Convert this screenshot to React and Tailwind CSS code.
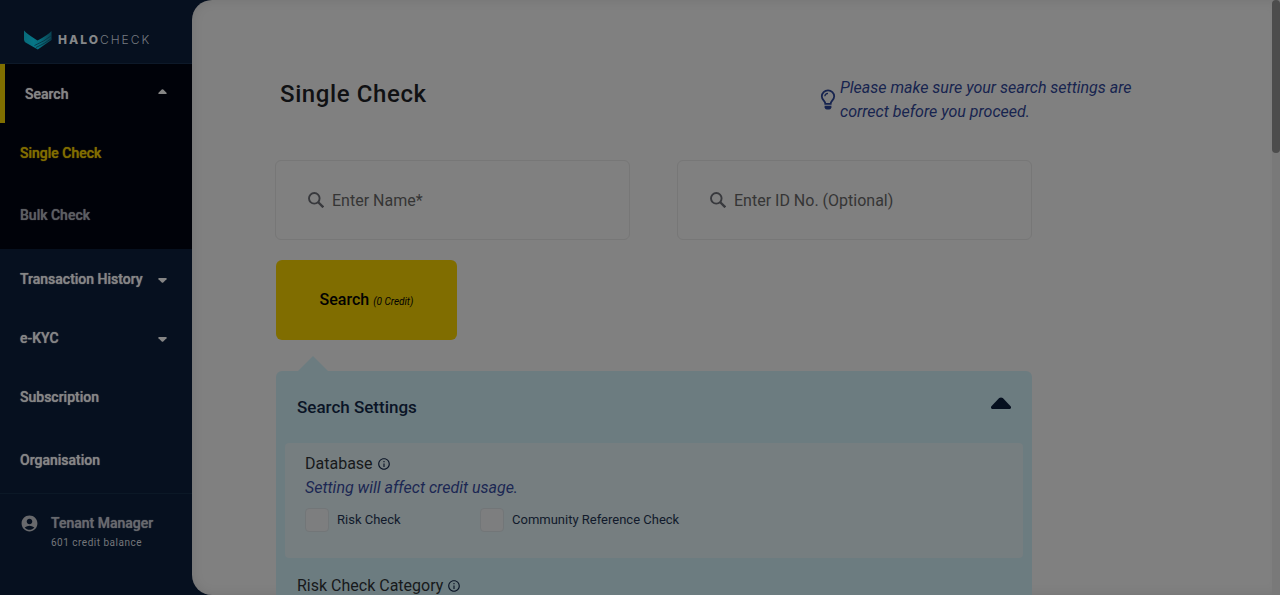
import { MdAccountCircle, MdInfoOutline } from 'react-icons/md';

function Caret({ up, className }) {
  return (
    <svg viewBox="0 0 10 6" className={className} fill="currentColor" aria-hidden="true">
      {up ? (
        <path d="M.6 6Q-.4 5.800.2 4.600L4.100.5Q5-.1 5.900.5L9.800 4.600Q10.400 5.800 9.400 6Z" />
      ) : (
        <path d="M.6 0Q-.4.2.2 1.400L4.100 5.500Q5 6.100 5.900 5.500L9.800 1.400Q10.400.2 9.400 0Z" />
      )}
    </svg>
  );
}

function Logo() {
  return (
    <a href="#home" className="flex h-16 items-center gap-[6px] border-b border-[#0d1929] pt-4 pl-6">
      <svg viewBox="0 0 28 20" className="h-5 w-7" aria-hidden="true">
        <defs>
          <linearGradient id="wing" x1="0" y1="0" x2="1" y2="0">
            <stop offset="0" stopColor="#086a79" />
            <stop offset="0.35" stopColor="#067687" />
            <stop offset="0.6" stopColor="#076a7a" />
            <stop offset="1" stopColor="#0a4352" />
          </linearGradient>
        </defs>
        <path fill="url(#wing)" d="M0 .5Q3 4 13.500 10.500Q24 5 27.500 1V10L13.800 19.500L1.500 12.500Q0 11.500 0 9.500Z" />
        <path fill="none" stroke="#07303f" strokeWidth=".8" d="M10.500 15.500Q21 11 27.500 5.500M12 17.500Q21 13.500 27.500 8.500" />
      </svg>
      <span className="font-['Inter',sans-serif] text-[12px] leading-4 tracking-[2px] text-[#777b81]">
        <b className="font-extrabold text-[#858789]">HALO</b>
        <span className="font-light">CHECK</span>
      </span>
    </a>
  );
}

function MenuButton({ label }) {
  return (
    <button type="button" aria-expanded="false" className="flex h-[59px] w-full items-center justify-between pr-[25px] pl-5 [text-shadow:0_0_1px_currentColor]">
      {label}
      <Caret className="mt-1 h-[5px] w-[9px]" />
    </button>
  );
}

function SearchField({ label }) {
  return (
    <label className="flex h-20 flex-1 items-center gap-2 rounded-md border border-[#777777] px-8">
      <svg viewBox="0 0 16 16" className="size-4 shrink-0 text-[#38393d]" fill="none" stroke="currentColor" aria-hidden="true">
        <circle cx="6.300" cy="6.300" r="5.300" strokeWidth="1.900" />
        <path strokeWidth="2.400" d="M10 10L15.300 15.300" />
      </svg>
      <input
        type="text"
        aria-label={label}
        placeholder={label}
        className="h-8 w-full min-w-0 bg-transparent pt-px text-base text-[#222222] outline-none placeholder:text-[#353535]"
      />
    </label>
  );
}

function Option({ label }) {
  return (
    <label className="flex items-center gap-2 text-[13px] leading-5 text-[#111a2b]">
      <input type="checkbox" className="size-6 shrink-0 appearance-none rounded border border-[#727678] bg-[#7d7e7f]" />
      {label}
    </label>
  );
}

function Bulb() {
  return (
    <svg viewBox="0 0 16 22" className="h-[22px] w-4 shrink-0 text-[#17244f]" fill="none" stroke="currentColor" aria-hidden="true">
      <path strokeWidth="1.800" d="M5.300 14.800C5.300 11.500 1.800 11 1.800 7.300A6.200 6 0 0 1 14.200 7.300C14.200 11 10.700 11.500 10.700 14.800Z" />
      <path strokeWidth="1.200" d="M4.800 7.200Q5 4.500 8 4.300" />
      <path fill="currentColor" stroke="none" d="M4.600 16.800H11.400V18.500Q10.900 20.600 9.300 20.600H6.700Q5.100 20.600 4.600 18.500Z" />
    </svg>
  );
}

export default function App() {
  return (
    <div className="flex h-screen overflow-hidden bg-[#06101f] font-['Roboto',sans-serif]">
      <aside className="flex w-48 shrink-0 flex-col">
        <Logo />
        <nav className="text-[14px] leading-5 font-medium text-[#858585] [text-shadow:0_0_1px_currentColor]">
          <div className="bg-[#000209] pb-[2px]">
            <button type="button" aria-expanded="true" className="flex h-[59px] w-full items-center justify-between border-l-[5px] border-[#806f00] pr-[25px] pl-5 [text-shadow:0_0_1px_currentColor]">
              Search
              <Caret up className="mb-1 h-[5px] w-[9px]" />
            </button>
            <a href="#single" className="flex h-[60px] items-center pl-5 text-[#806d00]">Single Check</a>
            <a href="#bulk" className="flex h-16 items-center pl-5 text-[#5c5e62]">Bulk Check</a>
          </div>
          <MenuButton label="Transaction History" />
          <MenuButton label="e-KYC" />
          <a href="#subscription" className="flex h-[59px] items-center pl-5">Subscription</a>
          <a href="#organisation" className="flex h-[67px] items-center pl-5">Organisation</a>
        </nav>
        <div className="flex items-start gap-3 border-t border-[#0b1826] pt-[19px] pl-5">
          <MdAccountCircle className="mt-px size-[19px] shrink-0 text-[#68696c]" />
          <div className="text-[#67696e]">
            <p className="text-[14px] leading-5 font-medium [text-shadow:0_0_1px_currentColor]">Tenant Manager</p>
            <p className="text-[10px] leading-5 tracking-wider text-[#75777b]">601 credit balance</p>
          </div>
        </div>
      </aside>

      <main className="flex min-w-0 flex-1 overflow-hidden rounded-l-[20px] bg-[#808080] shadow-[inset_0_0_12px_rgba(0,0,0,0.1)]">
        <div className="min-w-0 flex-1 overflow-hidden pr-[120px] pl-[83px]">
          <header className="flex items-center justify-between pt-[76px]">
            <h1 className="pb-3 pl-[5px] text-2xl leading-9 font-medium tracking-wide text-[#101113]">Single Check</h1>
            <p className="flex w-[332px] items-center gap-1 text-base leading-6 text-[#17244f] italic">
              <Bulb />
              <span>Please make sure your search settings are correct before you proceed.</span>
            </p>
          </header>

          <form className="mr-[120px] pt-9">
            <div className="flex gap-[47px]">
              <SearchField label="Enter Name*" />
              <SearchField label="Enter ID No. (Optional)" />
            </div>
            <button type="button" className="mt-5 ml-px h-20 w-[181px] rounded-md bg-[#806d00] text-base font-medium text-[#020202]">
              Search <i className="text-[10px] font-normal">(0 Credit)</i>
            </button>

            <section className="ml-px pt-4">
              <svg viewBox="0 0 30 15" className="ml-[22px] h-[15px] w-[30px]" aria-hidden="true">
                <path fill="#6c7c80" d="M0 15L15 0L30 15Z" />
              </svg>
              <div className="rounded-md bg-[#6c7c80] px-[9px]">
                <div className="flex h-[72px] items-center justify-between px-3">
                  <h2 className="text-[17px] leading-6 font-medium text-[#0a1426]">Search Settings</h2>
                  <button type="button" aria-label="Collapse search settings" className="pb-2 text-[#06101f]">
                    <Caret up className="h-3 w-5" />
                  </button>
                </div>
                <fieldset className="h-[115px] rounded bg-[#767e80] px-5 pt-[9px]">
                  <h3 className="flex items-center gap-1 text-base leading-6 text-[#17191b]">
                    Database <MdInfoOutline className="size-[14px] text-[#0a1426]" />
                  </h3>
                  <p className="text-base leading-6 text-[#1b2753] italic">Setting will affect credit usage.</p>
                  <div className="grid grid-cols-[175px_1fr] pt-2">
                    <Option label="Risk Check" />
                    <Option label="Community Reference Check" />
                  </div>
                </fieldset>
                <h3 className="flex h-16 items-start px-3 pt-4 text-base leading-6 text-[#17191b]">
                  <span className="flex items-center gap-1">
                    Risk Check Category <MdInfoOutline className="size-[14px] text-[#0a1426]" />
                  </span>
                </h3>
              </div>
            </section>
          </form>
        </div>
        <div className="w-2 shrink-0 bg-[#797979]" aria-hidden="true">
          <div className="h-[153px] rounded bg-[#4c4c4c]" />
        </div>
      </main>
    </div>
  );
}
